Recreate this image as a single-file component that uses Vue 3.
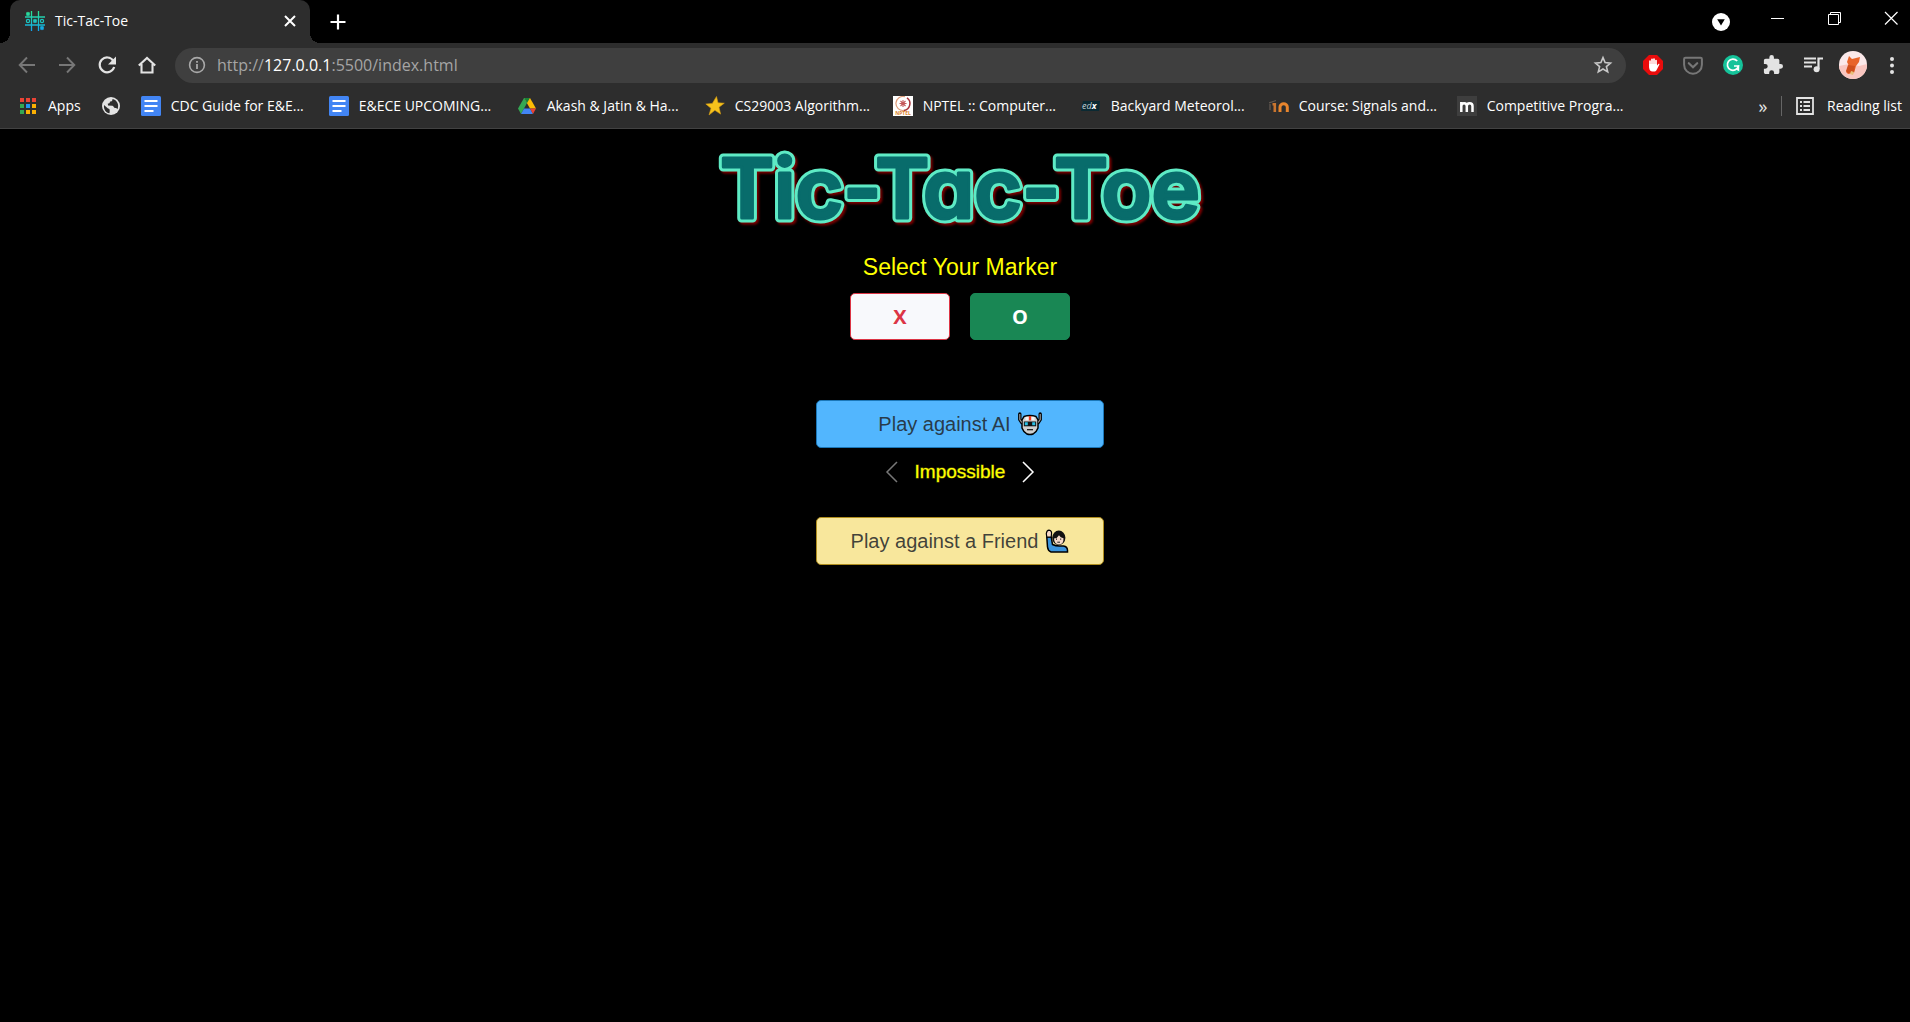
<script setup>
import { ref } from 'vue'

const bookmarks = [
  { icon: 'docs', label: 'CDC Guide for E&E...' },
  { icon: 'docs', label: 'E&ECE UPCOMING...' },
  { icon: 'drive', label: 'Akash & Jatin & Ha...' },
  { icon: 'star', label: 'CS29003 Algorithm...' },
  { icon: 'nptel', label: 'NPTEL :: Computer...' },
  { icon: 'edx', label: 'Backyard Meteorol...' },
  { icon: 'moodle', label: 'Course: Signals and...' },
  { icon: 'm', label: 'Competitive Progra...' },
]
const appDots = ['#ea4335', '#ea4335', '#ea4335', '#34a853', '#2196f3', '#fbb003', '#34a853', '#fbb003', '#fbb003']
const marker = ref('o')
</script>

<template>
  <div class="window">
    <header class="chrome">
      <div class="tabstrip">
        <div class="tab">
          <svg class="i20" viewBox="0 0 20 20" fill="none" aria-hidden="true">
            <defs>
              <linearGradient id="fav" x1="0" y1="0" x2="0" y2="20" gradientUnits="userSpaceOnUse">
                <stop offset="0" stop-color="#2be38f" />
                <stop offset="1" stop-color="#0fa2f2" />
              </linearGradient>
            </defs>
            <path d="M6.5 0v20M13.5 0v20M0 6h20M0 14h20" stroke="url(#fav)" stroke-width="1.3" />
            <path d="M1.5 1.5l3 3m0-3l-3 3M8.5 8.500l3 3m0-3l-3 3M15.500 15.500l3 3m0-3l-3 3" stroke="url(#fav)" stroke-width="1.800" />
            <circle cx="3" cy="10" r="1.600" stroke="#1cc6c0" stroke-width="1.200" />
            <circle cx="17" cy="10" r="1.600" stroke="#1cc6c0" stroke-width="1.200" />
          </svg>
          <span class="tab-title">Tic-Tac-Toe</span>
          <button class="plain i20" aria-label="Close tab">
            <svg class="i20" viewBox="0 0 20 20" aria-hidden="true"><path d="M5 5l10 10M15 5L5 15" stroke="#fff" stroke-width="2" /></svg>
          </button>
        </div>
        <button class="plain new-tab" aria-label="New tab">
          <svg class="i20" viewBox="0 0 20 20" aria-hidden="true"><path d="M10 2.500v15M2.500 10h15" stroke="#fff" stroke-width="2.200" /></svg>
        </button>
        <button class="plain tab-search" aria-label="Search tabs">
          <svg class="i20" viewBox="0 0 20 20" aria-hidden="true"><circle cx="10" cy="10" r="9" fill="#fff" /><path d="M6.200 7.300h7.600L10 13.500z" fill="#000" /></svg>
        </button>
        <div class="controls">
          <button class="plain" aria-label="Minimize"><svg class="i20" viewBox="0 0 20 20" aria-hidden="true"><path d="M4 10.500h13" stroke="#fff" /></svg></button>
          <button class="plain" aria-label="Restore"><svg class="i20" viewBox="0 0 20 20" fill="none" stroke="#fff" aria-hidden="true"><path d="M4.500 6.500h10v10h-10zM6.500 6.500v-2h10v10h-2" /></svg></button>
          <button class="plain" aria-label="Close"><svg class="i20" viewBox="0 0 20 20" aria-hidden="true"><path d="M4 4l12.500 12.500M16.500 4L4 16.500" stroke="#fff" stroke-width="1.200" /></svg></button>
        </div>
      </div>

      <div class="toolbar">
        <button class="plain tool" aria-label="Back"><svg class="i20" viewBox="0 0 20 20" fill="none" stroke="#777" stroke-width="1.900" aria-hidden="true"><path d="M18 10H3M10 2.500L2.700 10l7.300 7.500" /></svg></button>
        <button class="plain tool" aria-label="Forward"><svg class="i20" viewBox="0 0 20 20" fill="none" stroke="#777" stroke-width="1.900" aria-hidden="true"><path d="M2 10h15M10 2.500l7.300 7.500-7.300 7.500" /></svg></button>
        <button class="plain tool" aria-label="Reload"><svg class="i20" viewBox="0 0 20 20" aria-hidden="true"><path d="M16.300 5.800A7.400 7.400 0 1 0 17.200 12" fill="none" stroke="#e3e3e3" stroke-width="2.200" /><path d="M19 1.500v8h-8z" fill="#e3e3e3" /></svg></button>
        <button class="plain tool" aria-label="Home"><svg class="i20" viewBox="0 0 20 20" fill="none" stroke="#e3e3e3" stroke-width="2.100" aria-hidden="true"><path d="M1.800 10.500L10 3l8.200 7.500M4.500 9v8.500h11V9" /></svg></button>
        <div class="omnibox">
          <svg class="i20" viewBox="0 0 20 20" fill="none" stroke="#a9a9a9" aria-hidden="true"><circle cx="10" cy="10" r="7.400" stroke-width="1.600" /><path d="M10 9v5M10 6v1.800" stroke-width="1.800" /></svg>
          <div class="url" role="textbox" aria-label="Address" tabindex="0">http://<b>127.0.0.1</b>:5500/index.html</div>
          <button class="plain i20" aria-label="Bookmark this page"><svg class="i20" viewBox="0 0 20 20" fill="none" aria-hidden="true"><path d="M10 2.600l2.100 5 5.400.5-4.100 3.500 1.300 5.300L10 14l-4.700 2.900 1.300-5.300-4.100-3.500 5.400-.5z" stroke="#c8c8c8" stroke-width="1.600" /></svg></button>
        </div>
        <button class="plain tool" aria-label="Ad blocker">
          <svg class="i20" viewBox="0 0 20 20" aria-hidden="true">
            <path d="M6 0h8l6 6v8l-6 6H6l-6-6V6z" fill="#e90c0c" />
            <path d="M7 12V6.200M9 10V4.300M11 10V4M13 11V5.500" stroke="#fff" stroke-width="1.700" stroke-linecap="round" />
            <path d="M6.200 9h7.600l.3 1.500 1.200-1.600c.8-.6 1.400.1 1 .8L13.600 15c-.6 1-1.500 1.500-2.600 1.500H9.500c-2 0-3.300-1.600-3.300-3.500z" fill="#fff" />
          </svg>
        </button>
        <button class="plain tool" aria-label="Save page"><svg class="i20" viewBox="0 0 20 20" fill="none" stroke="#777" aria-hidden="true"><path d="M2.500 2.700h15c.9 0 1.400.5 1.400 1.400v5.700a8.900 8.900 0 0 1-17.800 0V4.100c0-.9.500-1.400 1.400-1.400z" stroke-width="2" /><path d="M5.800 8.200l4.200 4 4.200-4" stroke-width="2.200" stroke-linecap="round" /></svg></button>
        <button class="plain tool" aria-label="Writing assistant"><svg class="i20" viewBox="0 0 20 20" fill="none" aria-hidden="true"><circle cx="10" cy="10" r="10" fill="#15c39a" /><path d="M14.200 6A5.600 5.600 0 1 0 15.400 11H11" stroke="#fff" stroke-width="1.700" /><path d="M15.500 10.500v4.500l-2-1" stroke="#fff" stroke-width="1.400" /></svg></button>
        <button class="plain tool" aria-label="Extensions"><svg class="i20" viewBox="1 1 22 22" fill="#e3e3e3" aria-hidden="true"><path d="M20.500 11H19V7c0-1.100-.9-2-2-2h-4V3.500a2.500 2.500 0 0 0-5 0V5H4c-1.100 0-2 .9-2 2v3.800h1.500a2.700 2.700 0 0 1 0 5.400H2V20c0 1.100.9 2 2 2h3.800v-1.500a2.700 2.700 0 0 1 5.400 0V22H17c1.100 0 2-.9 2-2v-4h1.500a2.500 2.500 0 0 0 0-5z" /></svg></button>
        <button class="plain tool" aria-label="Media controls"><svg class="i20" viewBox="0 0 20 20" aria-hidden="true"><path d="M1 3.500h12M1 7.500h12M1 11.500h8" stroke="#e3e3e3" stroke-width="2" /><path d="M15.500 14V3.500H20" fill="none" stroke="#e3e3e3" stroke-width="2.200" /><circle cx="13.600" cy="14.200" r="3" fill="#e3e3e3" /></svg></button>
        <button class="plain tool" aria-label="Profile">
          <svg class="avatar" viewBox="0 0 28 28" aria-hidden="true">
            <clipPath id="av"><circle cx="14" cy="14" r="14" /></clipPath>
            <g clip-path="url(#av)">
              <path d="M0 0h28v28H0z" fill="#fbe9ea" /><path d="M0 15l10-2 10 2 8-2v15H0z" fill="#f9c6c0" />
              <path d="M10 5l3 3 8-2-1 5-3 4-2 7-6 1-2-2 3-6-2-4z" fill="#e8642a" /><path d="M9 14l7 1-1 6-6 1-2-2z" fill="#cf4f1d" /><path d="M12 20l3 1-1 3-3-1z" fill="#e7c07b" />
            </g>
          </svg>
        </button>
        <button class="plain tool" aria-label="Menu"><svg class="i20" viewBox="0 0 20 20" fill="#e3e3e3" aria-hidden="true"><circle cx="10" cy="4" r="2" /><circle cx="10" cy="10.500" r="2" /><circle cx="10" cy="17" r="2" /></svg></button>
      </div>

      <nav class="bookmarks" aria-label="Bookmarks">
        <a href="#" class="bookmark apps">
          <svg class="i20" viewBox="0 0 20 20" aria-hidden="true"><rect v-for="(c, i) in appDots" :key="i" :x="2 + (i % 3) * 6" :y="2 + Math.floor(i / 3) * 6" width="4" height="4" :fill="c" /></svg>
          <span>Apps</span>
        </a>
        <a href="#" class="globe" aria-label="Web page">
          <svg class="i20" viewBox="0 0 20 20" aria-hidden="true"><circle cx="10" cy="10" r="9" fill="#e3e3e3" /><path d="M3 9l4 3.500c1.500.2 1.800 1 1.700 2.500l-.2 2.300C5 17 2.500 13.500 3 9zM11.500 3c0 2-.8 2.500-2.500 2.600-.2 1.800-.8 2-2.200 2l.2 2 4.500.2c1.300.5 1.300 2 2.300 2.200 1.500.2 2.200.3 2.700 1.200C18.500 8.500 16 4 11.500 3z" fill="#2d2d2d" /></svg>
        </a>
        <a v-for="b in bookmarks" :key="b.label" href="#" class="bookmark site">
          <svg class="i20" viewBox="0 0 20 20" aria-hidden="true">
            <g v-if="b.icon === 'docs'"><rect width="20" height="20" rx="1.500" fill="#4285f4" /><path d="M3.500 5h13M3.500 10h13M3.500 15h9" stroke="#fff" stroke-width="2.200" /></g>
            <g v-else-if="b.icon === 'drive'"><path d="M7 2h6l6 10.500h-6z" fill="#fbbc04" /><path d="M7 2h6l-3 5z" fill="#188038" /><path d="M7 2l3 5-6 11-3-5.500z" fill="#34a853" /><path d="M7 12.500h6l3 5.500H4z" fill="#4285f4" /><path d="M13 12.500h6L16 18z" fill="#ea4335" /></g>
            <path v-else-if="b.icon === 'star'" d="M11.500.5l1.500 6.300 6.300.4-5.300 4 1.600 6.900-5.700-3.800L4 19l2-6.700L.8 8l6.500-.6z" fill="#f6c21c" stroke="#d39a12" stroke-width=".6" />
            <g v-else-if="b.icon === 'nptel'" fill="none"><path d="M0 0h20v20H0z" fill="#fff" /><path d="M14 1.800A7 7 0 0 1 11 14.400" stroke="#a83238" stroke-width="1.500" /><path d="M12 .8A7 7 0 1 0 11 14.400" stroke="#dd9c7a" stroke-width="1.200" /><path d="M10 4v7M6.500 7.500h7M7.500 5l5 5M12.500 5l-5 5" stroke="#c4585a" stroke-width="1.100" /><text x="10" y="18.800" text-anchor="middle" class="nptel">NPTEL</text></g>
            <g v-else-if="b.icon === 'edx'"><path d="M2 5h17l-1 10H0z" fill="#0b2a33" /><text x="1" y="13" class="edx">ed<tspan class="edx-x">x</tspan></text></g>
            <g v-else-if="b.icon === 'moodle'" fill="none"><path d="M0 7l7-2.500M1 8v6" stroke="#625850" stroke-width="1.300" /><path d="M3.500 8.200h2.300V16" stroke="#c9752f" stroke-width="2.600" /><path d="M11 16v-5c0-4.200 7.300-4.200 7.300 0v5" stroke="#e8852d" stroke-width="3" /></g>
            <g v-else><path d="M0 0h20v20H0z" fill="#3e3e3e" /><path d="M4.300 16V6M4.300 10c0-3.700 5.500-3.700 5.500 0v6V10c0-3.700 5.700-3.700 5.700 0v6" fill="none" stroke="#fff" stroke-width="2.500" /></g>
          </svg>
          <span>{{ b.label }}</span>
        </a>
        <button class="plain more" aria-label="More bookmarks">»</button>
        <a href="#" class="bookmark reading">
          <svg class="i20" viewBox="0 0 20 20" fill="none" stroke="#e3e3e3" stroke-width="1.800" aria-hidden="true"><path d="M2 2h16v16H2zM5 6h2M5 10h2M5 14h2M8.500 6h6.500M8.500 10h6.500M8.500 14h6.500" /></svg>
          <span>Reading list</span>
        </a>
      </nav>
    </header>

    <main class="game">
      <h1>
        <svg class="logo" viewBox="0 0 520 90">
          <text x="260" y="73" text-anchor="middle" class="logo-text">Tic-Tac-Toe</text>
          <text x="260" y="73" text-anchor="middle" class="logo-text inner" aria-hidden="true">Tic-Tac-Toe</text>
        </svg>
      </h1>
      <h2>Select Your Marker</h2>
      <div class="markers">
        <button class="btn marker x" :aria-pressed="marker === 'x'" @click="marker = 'x'">X</button>
        <button class="btn marker o" :aria-pressed="marker === 'o'" @click="marker = 'o'">O</button>
      </div>
      <button class="btn play ai">
        <span>Play against AI</span>
        <svg class="emoji" viewBox="0 0 24 24" aria-hidden="true">
          <path d="M1.800 2v5.500l2 3M22.200 2v5.500l-2 3" fill="none" stroke="#000" stroke-width="3.400" stroke-linecap="round" />
          <path d="M6 4.500Q12 2.500 18 4.500L20 8v8q-1.500 4-4.500 5.700-3.500 1.600-7 0Q5.500 20 4 16V8z" fill="#cfcfcf" stroke="#000" stroke-width="1.500" />
          <path d="M1.800 2v5.500l2 3M22.200 2v5.500l-2 3" fill="none" stroke="#9a9a9a" stroke-width="1.200" />
          <path d="M7.500 4.800h9v3.400h-9z" fill="#f4f4f4" /><path d="M10.800 4h2.400v4.400h-2.400z" fill="#ef3b20" />
          <path d="M5.800 9.500h12.400v4.800H5.800z" fill="#111" /><path d="M6.800 10.300h3v3h-3zM14.200 10.300h3v3h-3z" fill="#28bfe5" /><path d="M9 17.700h6" stroke="#111" stroke-width="1.200" />
        </svg>
      </button>
      <div class="level">
        <button class="plain i24" aria-label="Easier" disabled><svg class="i24" viewBox="0 0 24 24" fill="none" aria-hidden="true"><path d="M17 2L7 12l10 10" stroke="#777" stroke-width="1.500" /></svg></button>
        <span>Impossible</span>
        <button class="plain i24" aria-label="Next level"><svg class="i24" viewBox="0 0 24 24" fill="none" aria-hidden="true"><path d="M7 2l10 10L7 22" stroke="#fff" stroke-width="1.500" /></svg></button>
      </div>
      <button class="btn play friend">
        <span>Play against a Friend</span>
        <svg class="emoji" viewBox="0 0 24 24" aria-hidden="true">
          <path d="M1.800 8h4.400l1.300 7.500q3 1.500 7 1.500h4q4 .5 4 4.500V23H6Q3 22 2.500 18z" fill="#3c94dc" stroke="#000" stroke-width="1.500" />
          <path d="M1.800 8L1.300 4.500Q1.800 1.200 4 1.200 7 1.500 6.500 5L6.200 8z" fill="#f6d9c8" stroke="#000" stroke-width="1.200" />
          <ellipse cx="13.800" cy="8.800" rx="6.600" ry="7.200" fill="#111" />
          <path d="M9 9.500q3.500-.3 5-3.300 1.300 2.300 4.500 3 .3 6.200-4.600 6.300Q9.300 15.300 9 9.500z" fill="#f6d9c8" />
          <path d="M11.500 9.500v1.300M15.700 9.500v1.300M12.300 13.200h2.700" stroke="#222" />
        </svg>
      </button>
    </main>
  </div>
</template>

<style>
body {
  margin: 0;
  background: #000;
}
</style>

<style scoped>
* {
  box-sizing: border-box;
}
.window {
  min-height: 100vh;
  background: #000;
  font-family: "Open Sans", "Noto Sans", sans-serif;
}
.plain {
  display: flex;
  align-items: center;
  justify-content: center;
  padding: 0;
  border: 0;
  background: none;
}
.i20 {
  display: block;
  flex: none;
  width: 20px;
  height: 20px;
}
.i24 {
  display: block;
  flex: none;
  width: 24px;
  height: 24px;
}
.chrome {
  color: #fff;
  font-size: 14px;
  white-space: nowrap;
  background: #2d2d2d;
  border-bottom: 1px solid #424242;
}
.tabstrip {
  display: flex;
  height: 43px;
  padding-left: 10px;
  background: #000;
}
.tab {
  position: relative;
  display: flex;
  align-items: center;
  gap: 10px;
  width: 300px;
  padding: 0 10px 2px 15px;
  background: #2d2d2d;
  border-radius: 10px 10px 0 0;
}
.tab::before,
.tab::after {
  content: "";
  position: absolute;
  bottom: 0;
  width: 10px;
  height: 10px;
}
.tab::before {
  right: 100%;
  background: radial-gradient(circle at 0 0, #000 10px, #2d2d2d 10px);
}
.tab::after {
  left: 100%;
  background: radial-gradient(circle at 100% 0, #000 10px, #2d2d2d 10px);
}
.tab-title {
  flex: 1;
}
.new-tab {
  width: 55px;
}
.tab-search {
  width: 20px;
  margin-left: auto;
}
.controls {
  display: flex;
  height: 36px;
  margin-left: 17px;
}
.controls button {
  width: 57px;
}
.controls button:last-child {
  width: 48px;
  padding-left: 9px;
}
.toolbar {
  display: flex;
  align-items: center;
  height: 44px;
  padding-left: 7px;
}
.tool {
  width: 40px;
  height: 36px;
}
.tool:last-child {
  width: 37px;
}
.avatar {
  flex: none;
  width: 28px;
  height: 28px;
}
.omnibox {
  display: flex;
  flex: 1;
  align-items: center;
  gap: 10px;
  height: 35px;
  margin: 0 7px 0 8px;
  padding: 0 13px 0 12px;
  color: #a5a5a5;
  font-size: 16px;
  background: #3f3f3f;
  border-radius: 18px;
}
.url {
  flex: 1;
}
.url b {
  color: #fff;
  font-weight: 400;
}
.bookmarks {
  display: flex;
  align-items: center;
  height: 41px;
  padding: 0 8px 4px 18px;
}
.bookmark {
  display: flex;
  align-items: center;
  gap: 10px;
  color: #fff;
  text-decoration: none;
}
.globe {
  margin: 0 20px;
}
.site {
  width: 188px;
}
.more {
  width: 20px;
  height: 30px;
  margin-left: auto;
  color: #e3e3e3;
  font: 18px "Open Sans", sans-serif;
}
.reading {
  gap: 12px;
  height: 20px;
  margin-left: 8px;
  padding-left: 13px;
  border-left: 1px solid #666;
}
.nptel {
  fill: #d9822b;
  font: 700 5px "Open Sans", sans-serif;
}
.edx {
  fill: #c3d0d3;
  font: italic 9px "Open Sans", sans-serif;
}
.edx-x {
  fill: #fff;
  font-weight: 700;
}
.game {
  display: flex;
  flex-direction: column;
  align-items: center;
  padding: 16px 0 0 10px;
  font-family: "Liberation Sans", Arial, sans-serif;
}
h1 {
  margin: 0;
}
.logo {
  display: block;
  width: 520px;
  height: 90px;
  overflow: visible;
  filter: drop-shadow(2px 2px 1px #7a0000);
}
.logo-text {
  fill: #5eebc5;
  stroke: #5eebc5;
  stroke-width: 9px;
  stroke-linejoin: round;
  font-family: Inter, sans-serif;
  font-size: 82px;
  font-weight: 600;
  font-feature-settings: "cv11";
}
.inner {
  fill: #086c6b;
  stroke: #086c6b;
  stroke-width: 3px;
}
h2 {
  margin: 18px 0 12px;
  color: #ff0;
  font-size: 23px;
  font-weight: 400;
  line-height: 28px;
}
.markers {
  display: flex;
  gap: 20px;
  margin-bottom: 60px;
}
.btn {
  border: 1px solid;
  border-radius: 5px;
}
.marker {
  width: 100px;
  height: 47px;
  font: 700 20px "Open Sans", sans-serif;
}
.x {
  color: #dc3545;
  background: #f8f9fc;
}
.o {
  color: #fff;
  background: #198754;
  border-color: #198754;
}
.play {
  display: flex;
  align-items: center;
  justify-content: center;
  gap: 7px;
  width: 288px;
  height: 48px;
  color: rgba(33, 37, 41, 0.85);
  font: 20px "Liberation Sans", Arial, sans-serif;
}
.ai {
  background: #52b6fe;
  border-color: #1b77b8;
}
.friend {
  background: #f8e79c;
  border-color: #b08e1e;
}
.emoji {
  flex: none;
  width: 24px;
  height: 24px;
}
.level {
  display: flex;
  align-items: center;
  gap: 11px;
  height: 48px;
  margin-bottom: 21px;
  color: #ff0;
  font-size: 19px;
  -webkit-text-stroke: 1px rgba(255, 255, 0, 0.4);
}
</style>
